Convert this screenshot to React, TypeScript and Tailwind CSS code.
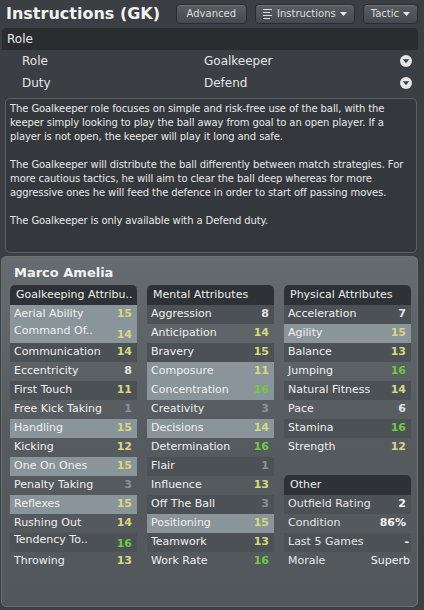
import React from "react";

type Kind = "n" | "s" | "h";
type Row = { l: string; v: string; k: Kind; up?: boolean };

const valColor = (v: string) => {
  const n = parseInt(v, 10);
  if (isNaN(n)) return "text-[#e8e8e8]";
  if (n >= 16) return "text-[#6fca42]";
  if (n >= 11) return "text-[#d6d97c]";
  if (n >= 5) return "text-[#e4e4e4]";
  return "text-[#8c9095]";
};

const gk: Row[] = [
  { l: "Aerial Ability", v: "15", k: "h" },
  { l: "Command Of..", v: "14", k: "h", up: true },
  { l: "Communication", v: "14", k: "s" },
  { l: "Eccentricity", v: "8", k: "n" },
  { l: "First Touch", v: "11", k: "s" },
  { l: "Free Kick Taking", v: "1", k: "n" },
  { l: "Handling", v: "15", k: "h" },
  { l: "Kicking", v: "12", k: "n" },
  { l: "One On Ones", v: "15", k: "h" },
  { l: "Penalty Taking", v: "3", k: "n" },
  { l: "Reflexes", v: "15", k: "h" },
  { l: "Rushing Out", v: "14", k: "n" },
  { l: "Tendency To..", v: "16", k: "s", up: true },
  { l: "Throwing", v: "13", k: "n" },
];

const mental: Row[] = [
  { l: "Aggression", v: "8", k: "s" },
  { l: "Anticipation", v: "14", k: "n" },
  { l: "Bravery", v: "15", k: "s" },
  { l: "Composure", v: "11", k: "h" },
  { l: "Concentration", v: "16", k: "h" },
  { l: "Creativity", v: "3", k: "n" },
  { l: "Decisions", v: "14", k: "h" },
  { l: "Determination", v: "16", k: "n" },
  { l: "Flair", v: "1", k: "s" },
  { l: "Influence", v: "13", k: "n" },
  { l: "Off The Ball", v: "3", k: "s" },
  { l: "Positioning", v: "15", k: "h" },
  { l: "Teamwork", v: "13", k: "s" },
  { l: "Work Rate", v: "16", k: "n" },
];

const physical: Row[] = [
  { l: "Acceleration", v: "7", k: "s" },
  { l: "Agility", v: "15", k: "h" },
  { l: "Balance", v: "13", k: "s" },
  { l: "Jumping", v: "16", k: "n" },
  { l: "Natural Fitness", v: "14", k: "s" },
  { l: "Pace", v: "6", k: "n" },
  { l: "Stamina", v: "16", k: "s" },
  { l: "Strength", v: "12", k: "n" },
];

const bgFor = (k: Kind) =>
  k === "h" ? "bg-[#8a949b]" : k === "s" ? "bg-[#4c5155]" : "";

function StatRow({ r }: { r: Row }) {
  return (
    <div className={`flex h-[19px] items-center justify-between pl-[4px] pr-[5px] ${bgFor(r.k)}`}>
      <span className={`whitespace-nowrap text-[11px] text-[#f0f0f0] ${r.up ? "-mt-[5px]" : ""}`}>{r.l}</span>
      <span className={`text-[11px] font-bold ${valColor(r.v)} ${r.up ? "mt-[3px]" : ""}`}>{r.v}</span>
    </div>
  );
}

function Header({ t }: { t: string }) {
  return (
    <div className="flex h-[20px] items-center rounded-t-[5px] bg-[#2e3236] pl-[6px] text-[11px] text-[#ececec] whitespace-nowrap">
      {t}
    </div>
  );
}

function Column({ title, rows }: { title: string; rows: Row[] }) {
  return (
    <div className="flex w-[127px] flex-col">
      <Header t={title} />
      {rows.map((r) => (
        <StatRow key={r.l} r={r} />
      ))}
    </div>
  );
}

function Caret() {
  return (
    <svg width="7" height="4" viewBox="0 0 7 4" className="ml-[4px]">
      <path d="M0 0 H7 L3.5 4 Z" fill="#e8e8e8" />
    </svg>
  );
}

function Btn({ children, pad }: { children: React.ReactNode; pad: string }) {
  return (
    <div className={`flex h-[20px] items-center rounded-[4px] border border-[#2a2c2f] bg-gradient-to-b from-[#5a5e62] to-[#46494d] ${pad} text-[10px] whitespace-nowrap text-[#dcdcdc] shadow-[inset_0_1px_0_rgba(255,255,255,0.12)]`}>
      {children}
    </div>
  );
}

function DropIcon() {
  return (
    <svg width="12" height="12" viewBox="0 0 12 12">
      <circle cx="6" cy="6" r="6" fill="#e6e6e6" />
      <path d="M2.8 4.3 H9.2 L6 8.2 Z" fill="#3a3d41" />
    </svg>
  );
}

export default function App() {
  return (
    <div className="h-[610px] w-[424px] overflow-hidden bg-[#3b3e42] font-['DejaVu_Sans',sans-serif] text-[#e6e6e6]">
      {/* top bar */}
      <div className="flex h-[26px] items-center justify-between pl-[6px] pr-[6px] pt-[1px]">
        <div className="whitespace-nowrap text-[16px] font-semibold text-[#f2f2f2]">Instructions (GK)</div>
        <div className="flex items-center gap-[8px]">
          <Btn pad="px-[10px]">Advanced</Btn>
          <Btn pad="px-[7px]">
            <svg width="9" height="10" viewBox="0 0 9 10" className="mr-[5px]">
              <rect x="0" y="0" width="9" height="1" fill="#dcdcdc" />
              <rect x="0" y="3" width="7" height="1" fill="#dcdcdc" />
              <rect x="0" y="6" width="9" height="1" fill="#dcdcdc" />
              <rect x="0" y="9" width="7" height="1" fill="#dcdcdc" />
            </svg>
            Instructions
            <Caret />
          </Btn>
          <Btn pad="px-[7px]">
            Tactic
            <Caret />
          </Btn>
        </div>
      </div>

      {/* role section */}
      <div className="mx-[2px] mt-[2px] w-[416px]">
        <div className="flex h-[22px] items-center rounded-t-[4px] bg-[#2a2d30] pl-[5px] text-[12px] text-[#ececec]">
          Role
        </div>
        <div className="flex h-[22px] items-center pl-[20px] pr-[6px] text-[12px]">
          <span className="w-[182px]">Role</span>
          <span className="flex-1">Goalkeeper</span>
          <DropIcon />
        </div>
        <div className="flex h-[22px] items-center pl-[20px] pr-[6px] text-[12px]">
          <span className="w-[182px]">Duty</span>
          <span className="flex-1">Defend</span>
          <DropIcon />
        </div>
      </div>

      {/* description */}
      <div className="mx-[5px] mt-[4px] h-[155px] w-[412px] rounded-[5px] border border-[#5c6064] bg-[#34373b] px-[4px] pt-[3px] text-[10px] leading-[14px] tracking-[-0.1px] text-[#e8e8e8]">
        <p>
          The Goalkeeper role focuses on simple and risk-free use of the ball, with the keeper simply looking to play the
          ball away from goal to an open player. If a player is not open, the keeper will play it long and safe.
        </p>
        <p className="mt-[14px]">
          The Goalkeeper will distribute the ball differently between match strategies. For more cautious tactics, he will
          aim to clear the ball deep whereas for more aggressive ones he will feed the defence in order to start off
          passing moves.
        </p>
        <p className="mt-[14px]">The Goalkeeper is only available with a Defend duty.</p>
      </div>

      {/* player panel */}
      <div className="ml-[1px] mt-[3px] h-[351px] w-[417px] rounded-[5px] border border-[#6c7175] bg-gradient-to-b from-[#666b6f] via-[#565b5f] to-[#52575b] pl-[8px] pt-[4px]">
        <div className="h-[24px] pl-[4px] text-[13px] font-bold leading-[24px] text-[#f2f2f2]">Marco Amelia</div>
        <div className="flex gap-[10px]">
          <Column title="Goalkeeping Attribu.." rows={gk} />
          <Column title="Mental Attributes" rows={mental} />
          <div className="flex w-[127px] flex-col">
            <Column title="Physical Attributes" rows={physical} />
            <div className="mt-[18px]">
              <Header t="Other" />
              <div className="flex h-[19px] items-center justify-between bg-[#4c5155] pl-[4px] pr-[5px] text-[11px]">
                <span>Outfield Rating</span>
                <span className="font-bold text-[#f4f4f4]">2</span>
              </div>
              <div className="flex h-[19px] items-center justify-between pl-[4px] pr-[5px] text-[11px]">
                <span>Condition</span>
                <span className="font-bold text-[#f4f4f4]">86%</span>
              </div>
              <div className="flex h-[19px] items-center justify-between bg-[#4c5155] pl-[4px] pr-[2px] text-[11px]">
                <span>Last 5 Games</span>
                <span className="font-bold text-[#f4f4f4]">-</span>
              </div>
              <div className="flex h-[19px] items-center justify-between pl-[4px] pr-[1px] text-[11px]">
                <span>Morale</span>
                <span className="text-[#f4f4f4]">Superb</span>
              </div>
            </div>
          </div>
        </div>
      </div>
    </div>
  );
}
